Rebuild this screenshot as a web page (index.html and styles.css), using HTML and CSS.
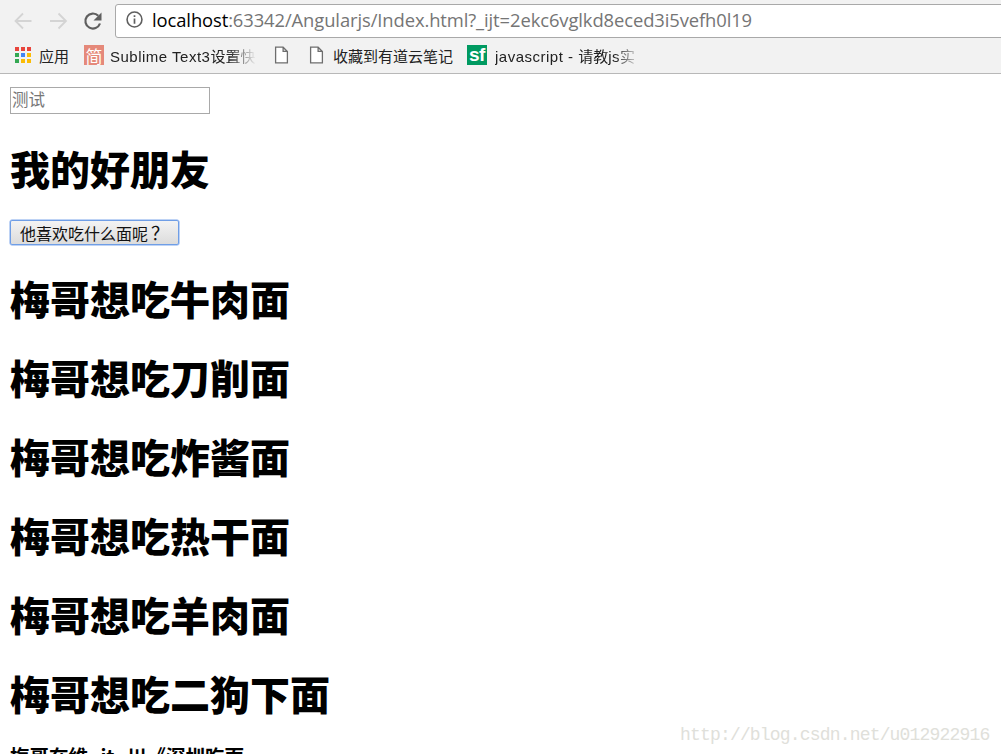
FILE: index.html
```html
<!DOCTYPE html>
<html lang="zh">
<head>
<meta charset="utf-8">
<title>Index</title>
<link rel="stylesheet" href="styles.css">
</head>
<body>
<header class="chrome">
  <div class="toolbar">
    <svg class="nav" width="22" height="22" viewBox="0 0 22 22"><path d="M19.5 11H4M11 3.5L3.5 11l7.5 7.5" fill="none" stroke="#d4d4d4" stroke-width="1.8"/></svg>
    <svg class="nav" width="22" height="22" viewBox="0 0 22 22"><path d="M3 11h15.5M11.5 3.5L19 11l-7.5 7.5" fill="none" stroke="#d4d4d4" stroke-width="1.8"/></svg>
    <svg class="nav" width="22" height="22" viewBox="0 0 22 22"><path d="M18 13.5A7.5 7.5 0 1 1 16.3 5.8" fill="none" stroke="#5f5f5f" stroke-width="2.2"/><path d="M19.5 2.5v8h-8z" fill="#5f5f5f"/></svg>
    <div class="omnibox">
      <svg width="17" height="17" viewBox="0 0 16 16"><circle cx="8" cy="8" r="7" fill="none" stroke="#5f5f5f" stroke-width="1.5"/><path d="M7.2 7h1.6v5H7.2zM7.2 4h1.6v1.7H7.2z" fill="#5f5f5f"/></svg>
      <span class="url"><span class="host">localhost</span>:63342/Angularjs/Index.html?_ijt=2ekc6vglkd8eced3i5vefh0l19</span>
    </div>
  </div>
  <nav class="bookmarks">
    <span class="bm bm-apps">
      <svg width="16" height="16" viewBox="0 0 16 16">
        <rect x="0" y="0" width="4" height="4" fill="#e8453c"/><rect x="6" y="0" width="4" height="4" fill="#e8453c"/><rect x="12" y="0" width="4" height="4" fill="#e8453c"/>
        <rect x="0" y="6" width="4" height="4" fill="#34a853"/><rect x="6" y="6" width="4" height="4" fill="#4285f4"/><rect x="12" y="6" width="4" height="4" fill="#fbbc05"/>
        <rect x="0" y="12" width="4" height="4" fill="#34a853"/><rect x="6" y="12" width="4" height="4" fill="#fbbc05"/><rect x="12" y="12" width="4" height="4" fill="#fbbc05"/>
      </svg>
      <span>应用</span>
    </span>
    <span class="bm bm-jian">
      <span class="fav fav-jian">简</span>
      <span class="fade fade-jian"><span class="latin">Sublime Text3</span>设置快</span>
    </span>
    <span class="bm bm-doc">
      <svg class="doc" width="15" height="18" viewBox="0 0 14 16"><path d="M1.5.7h7l4 4v10.600h-11zM8.500.7v4h4" fill="#fff" stroke="#6e6e6e" stroke-width="1.200"/></svg>
    </span>
    <span class="bm bm-youdao">
      <svg class="doc" width="15" height="18" viewBox="0 0 14 16"><path d="M1.500.7h7l4 4v10.600h-11zM8.500.7v4h4" fill="#fff" stroke="#6e6e6e" stroke-width="1.200"/></svg>
      <span>收藏到有道云笔记</span>
    </span>
    <span class="bm bm-sf">
      <span class="fav fav-sf">sf</span>
      <span class="fade fade-sf"><span class="latin">javascript - </span>请教<span class="latin">js</span>实</span>
    </span>
  </nav>
</header>
<main class="page">
  <input class="search" type="text" placeholder="测试">
  <h1>我的好朋友</h1>
  <button class="ask" type="button">他喜欢吃什么面呢<span class="qm">？</span></button>
  <h1>梅哥想吃牛肉面</h1>
  <h1>梅哥想吃刀削面</h1>
  <h1>梅哥想吃炸酱面</h1>
  <h1>梅哥想吃热干面</h1>
  <h1>梅哥想吃羊肉面</h1>
  <h1>梅哥想吃二狗下面</h1>
  <h3>梅哥在维 it 川《深圳吃面</h3>
</main>
<div class="watermark">http://blog.csdn.net/u012922916</div>
</body>
</html>
```
FILE: styles.css
```css
html, body { margin: 0; padding: 0; height: 754px; overflow: hidden; background: #fff; }
body { font-family: "Liberation Sans", "Noto Sans CJK SC", sans-serif; color: #000; }
.chrome { height: 73px; background: #f2f2f2; border-bottom: 1px solid #b8b8b8; }
.toolbar { height: 39px; display: flex; align-items: center; padding: 2px 0 0 12px; box-sizing: border-box; gap: 13px; }
.omnibox { flex: 1; height: 34px; margin-left: -2px; margin-right: -6px; box-sizing: border-box; background: #fff; border: 1px solid #a9a9a9; border-radius: 3px; display: flex; align-items: center; gap: 9px; padding: 0 0 2px 10px; }
.url { font-size: 18.4px; color: #757575; white-space: nowrap; font-family: "Open Sans", "Liberation Sans", sans-serif; letter-spacing: -.1px; }
.host { color: #000; }
.bookmarks { height: 34px; display: flex; align-items: center; font-size: 15px; color: #222; padding-bottom: 2px; box-sizing: border-box; }
.bm { display: flex; align-items: center; gap: 8px; white-space: nowrap; }
.bm-apps { margin-left: 15px; width: 69px; }
.bm-jian { width: 189px; gap: 6px; }
.bm-doc { width: 35px; }
.bm-youdao { width: 159px; gap: 9px; }
.doc { margin-left: 1px; }
.fav { width: 20px; height: 20px; display: flex; align-items: center; justify-content: center; color: #fff; flex: none; }
.fav-jian { background: #e5897a; font-size: 17px; }
.fav-sf { background: #009a61; font-weight: bold; font-size: 19px; font-family: "Liberation Sans", sans-serif; letter-spacing: -.5px; }
.latin { letter-spacing: .5px; }
.fade { overflow: hidden; display: block; -webkit-mask-image: linear-gradient(to right, #000 82%, transparent); mask-image: linear-gradient(to right, #000 82%, transparent); }
.fade-jian { width: 146px; }
.fade-sf { width: 146px; }
.page { padding: 13px 10px 0; }
.search { display: block; box-sizing: border-box; width: 200px; height: 27px; padding: 0 2px 3px 1px; border: 1px solid #a9a9a9; font: 16.5px "Noto Sans CJK SC", sans-serif; }
.search::placeholder { color: #777; }
h1 { font-size: 40px; line-height: 45px; font-weight: 900; margin: 0 0 34px; font-family: "Noto Sans CJK SC", sans-serif; white-space: nowrap; }
.search + h1 { margin-top: 32px; margin-bottom: 29px; }
.ask { display: block; box-sizing: border-box; width: 169px; height: 25px; padding: 1px 0 0 9px; text-align: left; border: 1px solid #6f9ee6; border-radius: 2px; background: linear-gradient(#f3f3f3, #dcdcdc); box-shadow: 0 0 0 .5px #7fa8ec; font: 16px/20px "Noto Sans CJK SC", sans-serif; color: #111; margin-bottom: 31px; white-space: nowrap; }
.qm { font-family: "Noto Sans CJK TC", sans-serif; font-size: 18px; line-height: 18px; margin-left: 3px; }
h3 { font-size: 19.5px; line-height: 28px; word-spacing: 8px; margin: -8px 0 0; font-weight: bold; font-family: "Noto Sans CJK SC", sans-serif; white-space: nowrap; }
.watermark { position: absolute; left: 680px; top: 725px; font: 18px "Liberation Mono", monospace; color: #e0e0da; letter-spacing: -.82px; white-space: nowrap; }
```
